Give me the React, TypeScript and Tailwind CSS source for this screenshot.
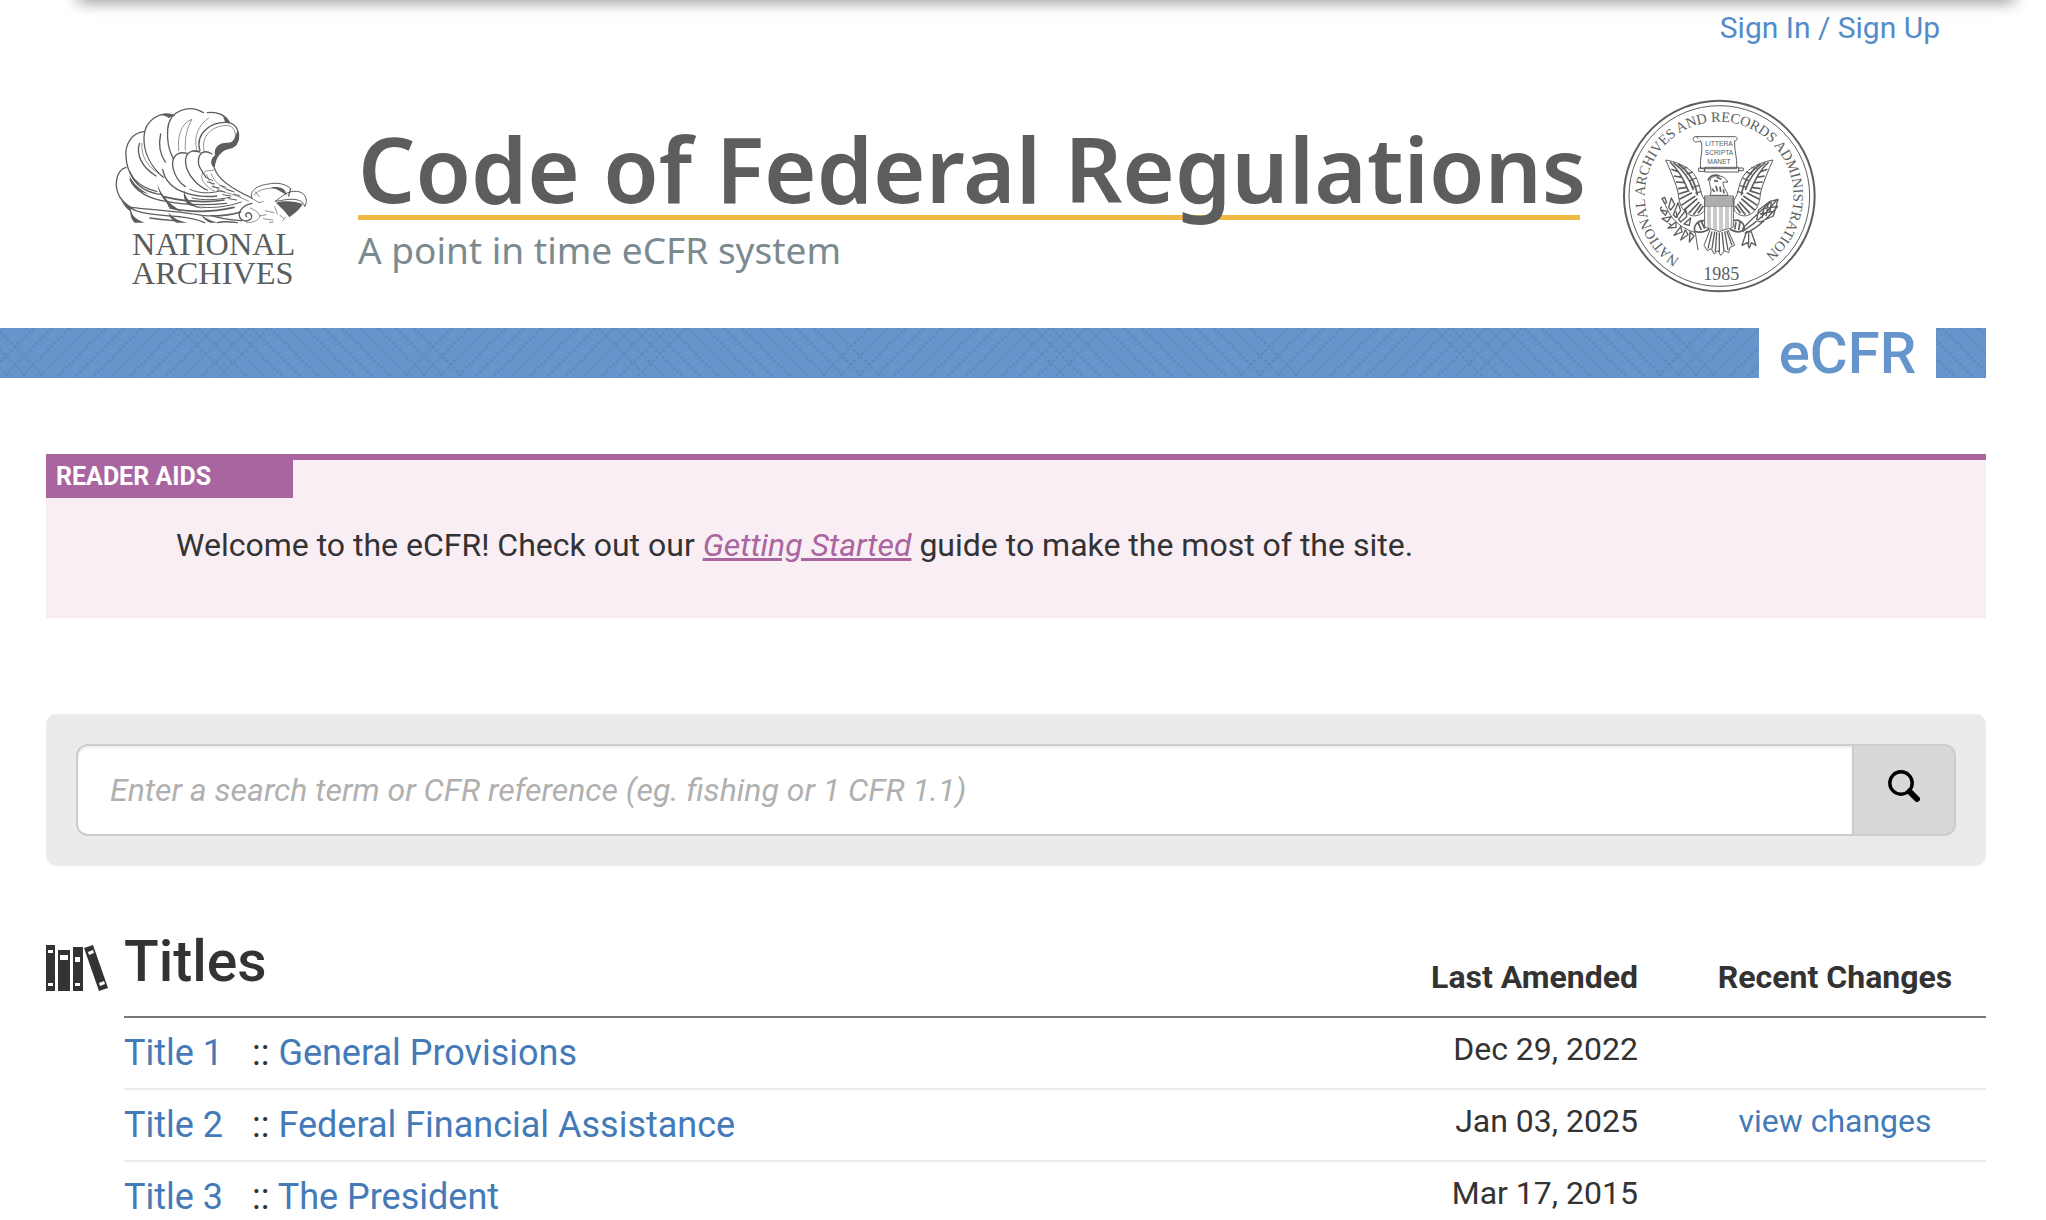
import React from 'react'

interface TitleRow {
  number: number
  name: string
  lastAmended: string
  hasChanges?: boolean
}

const titles: TitleRow[] = [
  { number: 1, name: 'General Provisions', lastAmended: 'Dec 29, 2022' },
  { number: 2, name: 'Federal Financial Assistance', lastAmended: 'Jan 03, 2025', hasChanges: true },
  { number: 3, name: 'The President', lastAmended: 'Mar 17, 2015' }
]

const NationalArchivesLogo: React.FC = () => (
  <svg className="w-[230px] h-[210px] shrink-0" viewBox="0 0 690 630" fill="none" stroke="#5c5d5e" strokeWidth="4" strokeLinecap="round" role="img" aria-label="National Archives">
    {/* Outer feathers */}
    <path d="M78 232 C45 242 42 292 60 322 C76 348 96 362 128 368 C168 376 205 378 240 380" />
    <path d="M132 125 C98 128 74 160 78 200 C80 246 104 288 170 304" />
    <path d="M222 76 C178 62 134 92 132 140 C130 186 152 230 190 262" />
    <path d="M310 68 C268 42 208 60 203 118 C200 156 208 184 220 206" />
    <path d="M322 68 C350 64 376 74 388 98" />
    <path d="M300 182 C284 130 334 92 388 98 C416 106 424 140 406 166" />
    <path d="M312 182 C302 138 336 106 384 106 C400 110 408 124 406 140" strokeWidth="2" />
    <path d="M290 178 C280 140 296 104 326 84" strokeWidth="2" />
    <path d="M236 182 C232 140 242 100 276 88 C262 112 254 140 256 180" strokeWidth="2" />
    <path d="M182 132 C174 168 182 196 196 216" />
    <path d="M118 160 C108 196 126 232 168 258" />
    <path d="M126 160 C122 196 140 228 176 250" strokeWidth="2" />
    {/* Heavy shading on the feather edges */}
    <g fill="#5c5d5e" stroke="none">
      <path d="M345 196 C340 172 358 158 380 158 C400 160 404 146 412 122 C424 146 412 172 390 176 C364 180 346 202 344 236 C328 222 332 206 345 196 Z" />
      <path d="M180 74 C196 68 212 70 224 76 L206 84 C200 78 190 76 180 74 Z" />
      <path d="M368 76 C380 82 388 90 390 100 L376 98 Z" />
      <path d="M62 322 C74 338 88 350 104 354 L92 358 L98 374 C108 388 124 394 134 398 L104 398 C92 388 92 374 90 364 C76 352 66 340 62 322 Z" />
      <path d="M172 282 C180 306 196 330 226 352 L246 366 L206 352 C204 336 176 320 172 282 Z" />
      <path d="M252 300 C256 330 280 350 320 360 L268 346 C252 336 250 316 252 300 Z" />
      <path d="M206 368 C222 388 240 392 262 398 L230 398 C218 392 208 382 206 368 Z" />
      <path d="M304 374 C320 388 336 392 352 398 L330 398 C318 392 308 384 304 374 Z" />
      <path d="M274 184 C286 178 296 180 304 190 L290 186 Z" />
      <path d="M88 256 C100 282 120 300 146 312 C116 306 92 288 88 256 Z" />
      <path d="M528 338 C552 330 590 334 608 342 C600 358 584 370 568 382 C552 360 540 350 528 338 Z" />
      <path d="M512 292 C540 288 556 296 558 310 C546 312 542 300 512 292 Z" />
    </g>
    {/* Inner coverts */}
    <path d="M262 190 C226 182 212 206 220 238 C226 258 240 280 256 290" />
    <path d="M298 184 C258 176 250 206 262 240 C270 262 296 290 322 300" />
    <path d="M336 192 C306 174 292 196 296 224 C300 238 310 248 318 262" />
    <path d="M344 236 C340 250 318 232 306 254 C300 272 322 292 344 304" strokeWidth="2" />
    <path d="M344 236 C354 268 398 298 456 324" />
    <path d="M188 238 C194 272 220 298 256 308 C280 318 320 322 350 318" />
    <path d="M90 246 C104 286 140 308 186 314" />
    <path d="M90 268 C104 304 150 328 200 334 C250 344 320 346 380 340" />
    <path d="M94 352 C160 360 236 364 306 376 C350 380 396 374 422 366" />
    <path d="M190 320 C250 334 320 338 372 330" strokeWidth="5" />
    <path d="M210 354 C270 368 340 366 402 352" strokeWidth="5" />
    <path d="M270 298 C300 312 330 310 356 304 M276 324 C310 332 350 330 390 322 M286 350 C330 356 380 352 424 336" strokeWidth="3" />
    <path d="M320 254 C326 280 350 300 380 308 C400 314 424 322 446 334 M334 252 C344 282 374 298 404 306" strokeWidth="2" />
    <path d="M318 262 l20 10 M322 276 l22 6 M336 290 l22 4 M352 302 l22 4 M368 314 l24 4 M386 326 l24 4 M360 286 l18 6 M380 298 l18 6 M402 312 l18 6" strokeWidth="3" />
    <path d="M334 376 C364 388 396 390 426 392 M236 380 C280 384 300 392 314 398 M150 384 C180 388 200 390 222 392 M352 398 C376 392 396 396 412 398" />
    <path d="M456 340 C424 346 408 372 424 388 C440 400 464 386 452 372 C444 364 432 372 440 380" />
    <path d="M450 354 C466 360 484 372 478 384 C468 396 450 398 440 398" strokeWidth="2" />
    {/* Head and beak */}
    <path d="M456 326 C446 304 470 286 506 282 C530 276 560 282 572 296" strokeWidth="3" />
    <path d="M462 316 C474 296 512 290 546 298" strokeWidth="2" />
    <path d="M526 334 C548 318 562 302 590 304 C616 306 626 330 614 350 C612 340 606 334 594 330 C570 324 546 332 526 334 Z" strokeWidth="3" />
    <path d="M572 296 L566 318 M548 300 L558 312" />
    <path d="M456 326 l22 12 M466 306 l12 14 M478 338 l12 -4 M496 362 l26 6 M478 378 l20 -4 M490 386 l28 4 M540 376 l10 8 M548 392 l8 -10 M508 398 l12 -2 M524 350 l8 22" strokeWidth="2" />
    <g fill="#5c5d5e" stroke="none" fontFamily="'Liberation Serif', serif" fontSize="97" textAnchor="middle">
      <text x="341" y="495">NATIONAL</text>
      <text x="338" y="581">ARCHIVES</text>
    </g>
  </svg>
)

const wing = (
  <>
    <path d="M167 210 C190 214 226 224 250 250 C272 276 268 310 284 330 L284 360 C266 386 236 380 222 362 C208 346 206 324 204 306 C196 276 180 238 167 210 Z" />
    <path d="M180 216 C206 240 222 270 234 300 M190 218 C220 240 240 268 250 300 M204 222 C236 244 256 276 262 316 M184 238 L206 246 M192 258 L216 262 M198 276 L224 278 M204 296 L232 292 M206 312 L238 302 M208 328 L246 308 M214 346 L256 318 M222 360 L262 326 M236 370 L268 336 M250 374 L274 342 M264 370 L280 348" strokeWidth="5" />
    <path d="M216 236 L232 232 M230 252 L248 246 M240 272 L258 264 M248 292 L268 286 M256 310 L274 304" strokeWidth="4" />
  </>
)

const ArchivesSeal: React.FC = () => (
  <svg className="w-[220px] h-[210px] shrink-0" viewBox="0 0 660 630" fill="none" stroke="#5c5d5e" strokeWidth="3" strokeLinejoin="round" role="img" aria-label="National Archives and Records Administration seal">
    <circle cx="328" cy="318" r="286" strokeWidth="6" />
    <circle cx="328" cy="318" r="271" strokeWidth="3" />
    <path id="seal-ring" stroke="none" d="M209 507 A223 223 0 1 1 467 492" />
    <text fill="#5c5d5e" stroke="none" fontFamily="'Liberation Serif', serif" fontSize="43">
      <textPath href="#seal-ring">NATIONAL ARCHIVES AND RECORDS ADMINISTRATION</textPath>
    </text>
    <text x="334" y="571" textAnchor="middle" fill="#5c5d5e" stroke="none" fontFamily="'Liberation Serif', serif" fontSize="54">1985</text>
    {/* Scroll */}
    <path d="M256 140 H374 C386 140 382 154 374 152 C372 180 382 200 380 236 H272 C268 200 282 180 272 152 C262 158 246 158 250 144 C252 138 262 138 264 146" />
    <path d="M284 232 H386 V246 H284 Z M266 234 h18 v10 h-18 Z M386 234 h14 v8 h-14 Z" />
    <g fill="#5c5d5e" stroke="none" fontFamily="'Liberation Sans', sans-serif" fontSize="20" textAnchor="middle">
      <text x="327" y="167">LITTERA</text>
      <text x="327" y="194">SCRIPTA</text>
      <text x="327" y="221">MANET</text>
    </g>
    {wing}
    <g transform="translate(656 0) scale(-1 1)">{wing}</g>
    {/* Eagle head */}
    <path d="M300 316 C310 296 292 284 302 266 C314 254 336 256 346 266 L354 276 L340 276 C336 290 350 300 354 316 Z" />
    <path d="M294 272 C298 256 316 252 328 258 M306 296 l8 10 M318 288 l4 16 M330 290 l2 16 M340 298 l2 12 M312 272 l12 2 M320 262 l14 6" strokeWidth="5" />
    {/* Shield */}
    <path d="M284 318 H370 V408 C370 418 344 414 328 426 C312 414 284 418 284 408 Z" fill="#ffffff" />
    <path d="M284 324 H370 M284 330 H370 M284 336 H370 M284 342 H370 M284 348 H370" strokeWidth="3" />
    <path d="M294 348 V414 M300 348 V414 M312 348 V416 M318 348 V418 M330 348 V422 M336 348 V420 M348 348 V416 M354 348 V414 M364 348 V412" strokeWidth="2" />
    {/* Tail and legs */}
    <path d="M300 420 L282 466 L292 482 L304 476 L312 492 L324 482 L332 496 L344 482 L356 488 L360 472 L374 466 L354 420" />
    <path d="M306 424 L294 476 M314 424 L306 476 M320 426 L316 486 M328 428 V486 M336 426 L342 484 M344 424 L354 480 M350 422 L366 466" strokeWidth="4" />
    <path d="M284 392 C262 390 250 408 254 424 C268 430 288 424 298 418 M264 398 l10 22 M274 394 l10 22 M370 392 C388 386 406 400 402 420 C388 430 370 424 360 418 M378 396 l-4 22 M390 396 l-4 24" strokeWidth="5" />
    {/* Olive branch */}
    <path d="M164 340 C180 380 200 410 256 428 L264 480" />
    <path d="M164 340 l-8 -14 8 -4 6 16 Z M172 364 l-20 -4 14 16 Z M176 352 l8 -28 10 20 -12 16 Z M184 380 l-28 6 16 10 Z M190 374 l14 -36 8 24 -14 20 Z M198 396 l-24 18 24 -2 Z M206 388 l22 -28 2 20 -18 16 Z M212 410 l-20 26 24 -10 Z M222 402 l20 -18 -4 22 Z M226 420 l-14 30 22 -16 Z M240 426 l-2 30 14 -18 Z M156 350 l-6 6 M198 364 l4 20 M176 400 l8 6" strokeWidth="4" />
    {/* Arrows */}
    <path d="M398 424 C430 404 470 370 500 330 M404 430 C436 420 470 388 504 348 M396 418 C420 390 456 360 482 336 M440 388 L446 360 L480 334 L504 328 L498 350 L490 378 L450 396 Z M456 384 l6 -30 M468 378 l6 -34 M480 366 l4 -30 M450 372 l40 -8 M460 356 l40 -6" strokeWidth="4" />
    <path d="M410 424 L396 466 L412 458 L418 474 L424 458 L438 466 L424 426 Z M416 430 V462" strokeWidth="4" />
  </svg>
)

const slopes = Array.from({ length: 14 }).map((_, i) => i * 18)

// Dashed cross-hatching, repeated every 418px
const BandPattern: React.FC = () => (
  <svg className="absolute inset-0 w-full h-full" aria-hidden="true">
    <defs>
      <pattern id="band-hatch" width="418" height="50" patternUnits="userSpaceOnUse">
        <g stroke="#5a8abb" strokeWidth="2" strokeDasharray="3 2">
          {slopes.map((x) => (
            <React.Fragment key={x}>
              <path d={`M${x + 34} 0 l-50 50`} />
              <path d={`M${x + 452} 0 l-50 50`} />
              <path d={`M${x + 180} 0 l50 50`} />
              <path d={`M${x - 238} 0 l50 50`} />
            </React.Fragment>
          ))}
        </g>
      </pattern>
    </defs>
    <rect width="100%" height="100%" fill="url(#band-hatch)" />
  </svg>
)

const BooksIcon: React.FC = () => (
  <svg className="w-[64px] h-[48px]" viewBox="0 0 64 48" fill="#333333" aria-hidden="true">
    <path fillRule="evenodd" d="M0 1h9v46H0Z M2 6v3h5v-3Z M2 39v3h5v-3Z" />
    <path fillRule="evenodd" d="M12 6h12v41H12Z M14 11v5h8v-5Z" />
    <path fillRule="evenodd" d="M27 3h10v44H27Z M29 13v5h5v-5Z M29 39v3h5v-3Z" />
    <path fillRule="evenodd" d="M38 4l9 -3 15 43 -9 3Z M42 8l1 3 5 -2 -1 -3Z M53 39l1 3 5 -2 -1 -3Z" />
  </svg>
)

const SearchIcon: React.FC = () => (
  <svg className="w-[34px] h-[34px]" viewBox="0 0 34 34" fill="none" stroke="#000000" aria-hidden="true">
    <circle cx="14" cy="14" r="11.2" strokeWidth="3.4" />
    <path d="M22.5 22.5 L30 30" strokeWidth="6" strokeLinecap="round" />
  </svg>
)

const App: React.FC = () => {
  return (
    <div className="flex flex-col min-h-screen overflow-hidden bg-white text-[#333333] font-['Roboto',sans-serif] text-[32px]">
      {/* Shadow of the utility bar */}
      <div className="h-2 -mt-2 ml-[78px] mr-8 shadow-[0_0_16px_rgba(0,0,0,0.7)]"></div>

      <header>
        <div className="flex justify-end pr-[106px] pt-2">
          <a href="#sign-in" className="text-[30px] leading-[40px] text-[#548bc9]">Sign In / Sign Up</a>
        </div>

        <div className="flex pl-[100px] pt-[42px]">
          <NationalArchivesLogo />
          <div className="w-[1222px] ml-7 mr-[30px] pt-5">
            <h1 className="h-[110px] border-b-[5px] border-[#f0b944] text-[90px] leading-[116px] font-semibold text-[#5c5d5e] font-['Noto_Sans',sans-serif] whitespace-nowrap">
              Code of Federal Regulations
            </h1>
            <p className="text-[37px] leading-[60px] text-[#7b8a8f] font-['Noto_Sans',sans-serif]">A point in time eCFR system</p>
          </div>
          <ArchivesSeal />
        </div>

        <div className="relative flex justify-end h-[50px] mt-7 mr-[60px] pr-[50px] bg-[#6595cb]">
          <BandPattern />
          <span className="relative w-[177px] bg-white text-center text-[58px] leading-[50px] font-medium text-[#6595cb]">eCFR</span>
        </div>
      </header>

      <main className="pl-[46px] pr-[60px]">
        <section className="mt-[76px] h-[164px] border-t-[6px] border-[#a9659f] bg-[#f9eef4]">
          <h2 className="w-[247px] h-[38px] pl-[10px] text-[25px] leading-[34px] font-bold text-white bg-[#a9659f]">READER AIDS</h2>
          <p className="pl-[130px] pt-[28px] leading-[38px]">
            Welcome to the eCFR! Check out our <a href="#getting-started" className="italic underline text-[#a9659f]">Getting Started</a> guide to make the most of the site.
          </p>
        </section>

        <form className="flex mt-24 p-[30px] rounded-[10px] bg-[#ebebeb]" onSubmit={(e) => e.preventDefault()}>
          <input
            type="text"
            aria-label="Search the eCFR"
            placeholder="Enter a search term or CFR reference (eg. fishing or 1 CFR 1.1)"
            className="flex-1 min-w-0 h-[92px] pl-8 pr-4 border-2 border-r-0 border-[#cccccc] rounded-l-[12px] bg-white shadow-[inset_0_2px_2px_rgba(0,0,0,0.07)] placeholder:italic placeholder:text-[#b0b0b0]"
          />
          <button type="submit" aria-label="Search" className="flex items-center justify-center w-[104px] h-[92px] pb-2 border-2 border-[#cccccc] rounded-r-[12px] bg-[#d8d8d8]">
            <SearchIcon />
          </button>
        </form>

        <section className="flex mt-[60px]">
          <div className="w-[78px] shrink-0 pt-[18px]">
            <BooksIcon />
          </div>
          <table className="flex-1 w-full border-separate border-spacing-0">
            <thead>
              <tr className="h-[92px]">
                <th colSpan={2} className="p-0 pb-5 align-bottom text-left border-b-2 border-[#777777]">
                  <h2 className="text-[57px] leading-[68px] font-medium">Titles</h2>
                </th>
                <th className="w-[300px] p-0 pr-[46px] pb-5 align-bottom text-right font-bold leading-[38px] border-b-2 border-[#777777]">Last Amended</th>
                <th className="w-[302px] p-0 pb-5 align-bottom text-center font-bold leading-[38px] border-b-2 border-[#777777]">Recent Changes</th>
              </tr>
            </thead>
            <tbody>
              {titles.map((title) => (
                <tr key={title.number} className="leading-[70px]">
                  <td className="w-[128px] p-0 align-top text-[36px] border-b-2 border-[#ebebeb]">
                    <a href={`#title-${title.number}`} className="text-[#447ab7]">Title {title.number}</a>
                  </td>
                  <td className="p-0 align-top text-[36px] border-b-2 border-[#ebebeb]">
                    :: <a href={`#title-${title.number}`} className="text-[#447ab7]">{title.name}</a>
                  </td>
                  <td className="p-0 pr-[46px] align-top text-right leading-[62px] border-b-2 border-[#ebebeb]">{title.lastAmended}</td>
                  <td className="p-0 align-top text-center leading-[62px] border-b-2 border-[#ebebeb]">
                    {title.hasChanges && <a href="#changes" className="text-[#447ab7]">view changes</a>}
                  </td>
                </tr>
              ))}
            </tbody>
          </table>
        </section>
      </main>
    </div>
  )
}

export default App
